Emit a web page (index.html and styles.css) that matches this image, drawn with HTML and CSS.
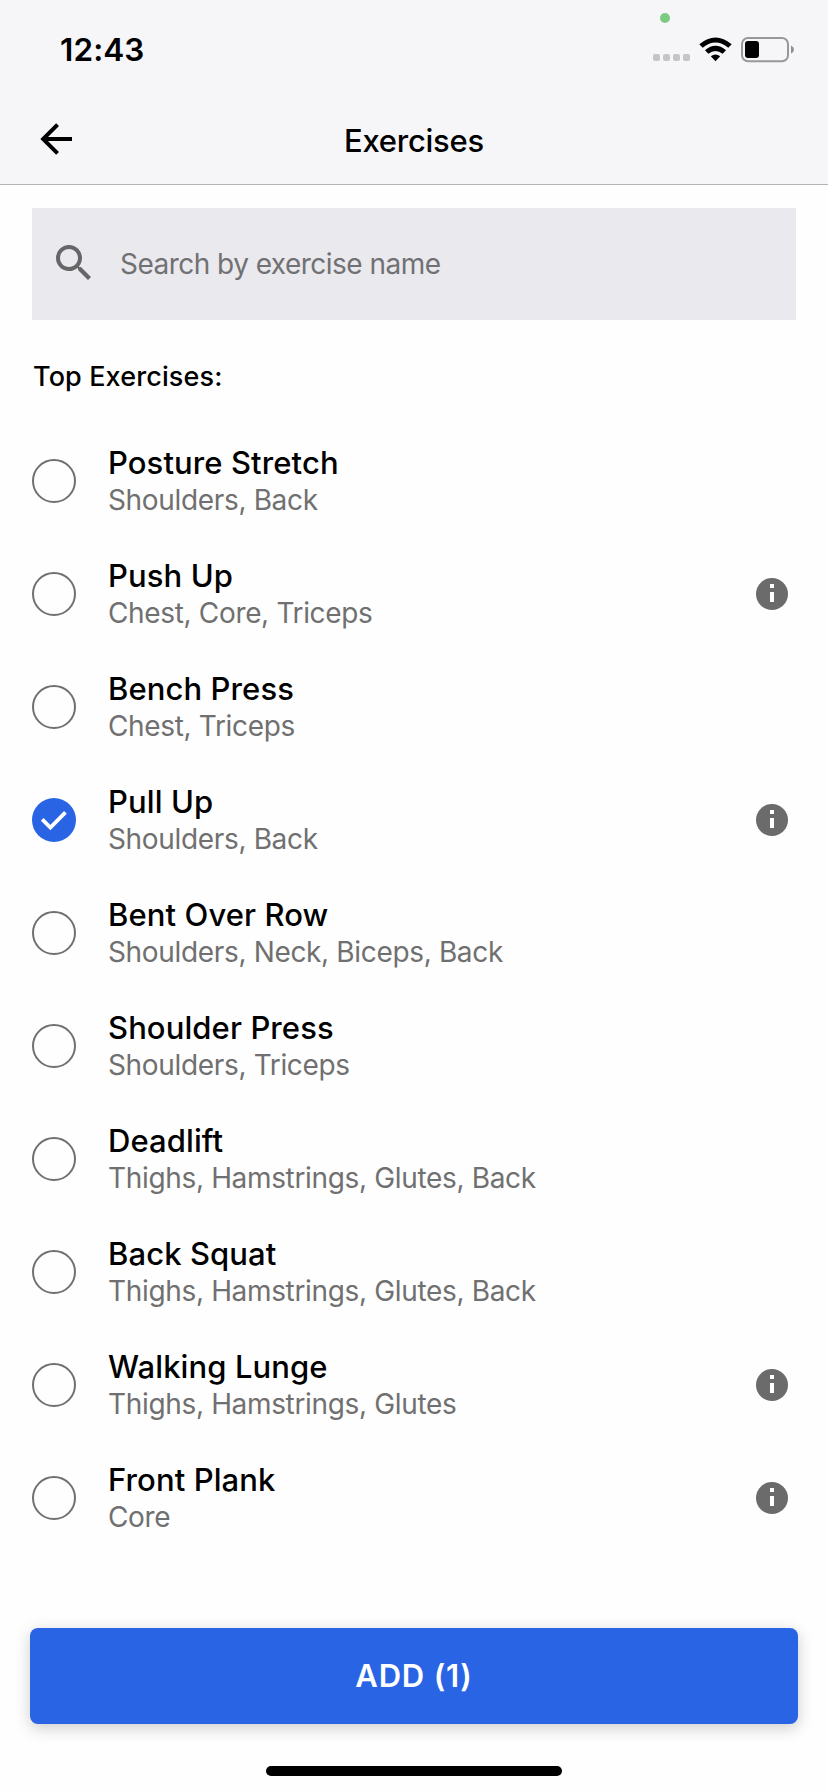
FILE: index.html
```html
<!DOCTYPE html>
<html lang="en">
<head>
<meta charset="utf-8">
<title>Exercises</title>
<link rel="stylesheet" href="styles.css">
</head>
<body>
<svg width="0" height="0" class="defs">
  <symbol id="info" viewBox="0 0 32 32"><circle cx="16" cy="16" r="16" fill="#6b6b6b"/><path d="M14 6h4v4h-4zM14 14h4v10h-4z" fill="#fff"/></symbol>
</svg>
<div class="screen">
  <header class="header">
    <div class="status">
      <span class="time">12:43</span>
      <svg class="status-icons" width="150" height="70" viewBox="650 0 150 70">
        <circle cx="665" cy="18" r="5" fill="#7bcb83"/>
        <g fill="#c5c5c7">
          <rect x="653" y="54" width="7" height="7" rx="2"/><rect x="663" y="54" width="7" height="7" rx="2"/><rect x="673" y="54" width="7" height="7" rx="2"/><rect x="683" y="54" width="7" height="7" rx="2"/>
        </g>
        <path d="M699.3 44.2Q715.5 30.6 731.7 44.2L728.3 47.8Q715.5 37.2 702.7 47.8Z"/>
        <path d="M705 50.2Q715.5 41.4 726 50.2L722.6 53.8Q715.5 48.2 708.4 53.8Z"/>
        <path d="M710.8 56.2Q715.5 52.6 720.2 56.2L715.5 61.2Z"/>
        <rect x="742" y="38" width="46" height="23.2" rx="6" fill="none" stroke="#98989a" stroke-width="2"/>
        <rect x="745" y="41" width="14" height="17" rx="3"/>
        <path d="M791 45.5Q794 46.8 794 49.5T791 53.5Z" fill="#8f8f91"/>
      </svg>
    </div>
    <div class="nav">
      <svg class="back" width="48" height="48" viewBox="0 0 24 24"><path d="M20,11V13H8L13.5,18.5L12.08,19.92L4.16,12L12.08,4.08L13.5,5.5L8,11H20Z"/></svg>
      <h1 class="title">Exercises</h1>
    </div>
  </header>
  <main class="main">
    <div class="search">
      <svg class="magnify" width="48" height="48" viewBox="0 0 24 24"><path fill="#666668" d="M9.5,3A6.5,6.5 0 0,1 16,9.5C16,11.11 15.41,12.59 14.44,13.73L14.71,14H15.5L20.5,19L19,20.5L14,15.5V14.71L13.73,14.44C12.59,15.41 11.11,16 9.5,16A6.5,6.5 0 0,1 3,9.5A6.5,6.5 0 0,1 9.5,3M9.5,5C7,5 5,7 5,9.5C5,12 7,14 9.5,14C12,14 14,12 14,9.5C14,7 12,5 9.5,5Z"/></svg>
      <span class="placeholder">Search by exercise name</span>
    </div>
    <h2 class="section">Top Exercises:</h2>
    <ul class="list">
      <li class="row"><span class="radio"></span><div class="text"><div class="name">Posture Stretch</div><div class="sub">Shoulders, Back</div></div></li>
      <li class="row"><span class="radio"></span><div class="text"><div class="name">Push Up</div><div class="sub">Chest, Core, Triceps</div></div><svg class="info"><use href="#info"/></svg></li>
      <li class="row"><span class="radio"></span><div class="text"><div class="name">Bench Press</div><div class="sub">Chest, Triceps</div></div></li>
      <li class="row"><svg class="check" width="44" height="44" viewBox="0 0 44 44"><circle cx="22" cy="22" r="22" fill="#2964e5"/><path d="M10.2 21.4L18.4 29.6L33.4 14.4" fill="none" stroke="#fff" stroke-width="3.8"/></svg><div class="text"><div class="name">Pull Up</div><div class="sub">Shoulders, Back</div></div><svg class="info"><use href="#info"/></svg></li>
      <li class="row"><span class="radio"></span><div class="text"><div class="name">Bent Over Row</div><div class="sub">Shoulders, Neck, Biceps, Back</div></div></li>
      <li class="row"><span class="radio"></span><div class="text"><div class="name">Shoulder Press</div><div class="sub">Shoulders, Triceps</div></div></li>
      <li class="row"><span class="radio"></span><div class="text"><div class="name">Deadlift</div><div class="sub">Thighs, Hamstrings, Glutes, Back</div></div></li>
      <li class="row"><span class="radio"></span><div class="text"><div class="name">Back Squat</div><div class="sub">Thighs, Hamstrings, Glutes, Back</div></div></li>
      <li class="row"><span class="radio"></span><div class="text"><div class="name">Walking Lunge</div><div class="sub">Thighs, Hamstrings, Glutes</div></div><svg class="info"><use href="#info"/></svg></li>
      <li class="row"><span class="radio"></span><div class="text"><div class="name">Front Plank</div><div class="sub">Core</div></div><svg class="info"><use href="#info"/></svg></li>
    </ul>
  </main>
  <footer class="footer">
    <button class="add">ADD (1)</button>
    <div class="home"></div>
  </footer>
</div>
</body>
</html>
```
FILE: styles.css
```css
* { box-sizing: border-box; margin: 0; padding: 0; }
body { background: #fefefe; font-family: Inter, "Liberation Sans", sans-serif; color: #000; }
.defs { display: block; }
.screen { width: 828px; height: 1792px; display: flex; flex-direction: column; overflow: hidden; }
.header { height: 185px; flex: none; background: #f6f6f9; border-bottom: 1px solid #b3b3b6; }
.status { height: 94px; display: flex; justify-content: space-between; padding: 0 28px 0 60px; }
.time { font-size: 31.5px; font-weight: 600; line-height: 40px; padding-top: 30px; letter-spacing: 0.1px; }
.nav { height: 90px; display: grid; grid-template-columns: 48px 1fr 48px; align-items: center; padding: 0 32px; }
.title { text-align: center; font-size: 31px; font-weight: 500; line-height: 40px; padding-top: 3px; letter-spacing: -0.25px; }
.main { padding: 23px 32px 0; flex: 1; }
.search { height: 112px; background: #eae9ee; display: flex; align-items: center; gap: 22px; padding-left: 18px; }
.magnify { margin-bottom: 2px; }
.placeholder { font-size: 28px; line-height: 36px; color: #717174; letter-spacing: -0.53px; }
.section { font-size: 27px; font-weight: 500; line-height: 36px; margin: 39px 0 29px 1px; letter-spacing: 0.12px; }
.list { list-style: none; }
.row { height: 113px; display: flex; align-items: center; padding-right: 8px; }
.radio { width: 44px; height: 44px; flex: none; border: 2px solid #707070; border-radius: 50%; }
.check { flex: none; }
.text { flex: 1; margin-left: 32px; }
.name { font-size: 31px; font-weight: 500; line-height: 38px; letter-spacing: 0.1px; }
.sub { font-size: 28px; line-height: 36px; color: #707070; letter-spacing: -0.34px; }
.info { width: 32px; height: 32px; flex: none; }
.footer { height: 164px; flex: none; padding: 0 30px; display: flex; flex-direction: column; align-items: center; }
.add { width: 768px; height: 96px; border: 0; border-radius: 8px; background: #2964e5; color: #fff; font: 600 31px/40px Inter, sans-serif; letter-spacing: 0.8px; box-shadow: 0 4px 16px rgba(0, 0, 0, .2); }
.home { width: 296px; height: 10px; border-radius: 5px; background: #000; margin-top: 42px; }
```
